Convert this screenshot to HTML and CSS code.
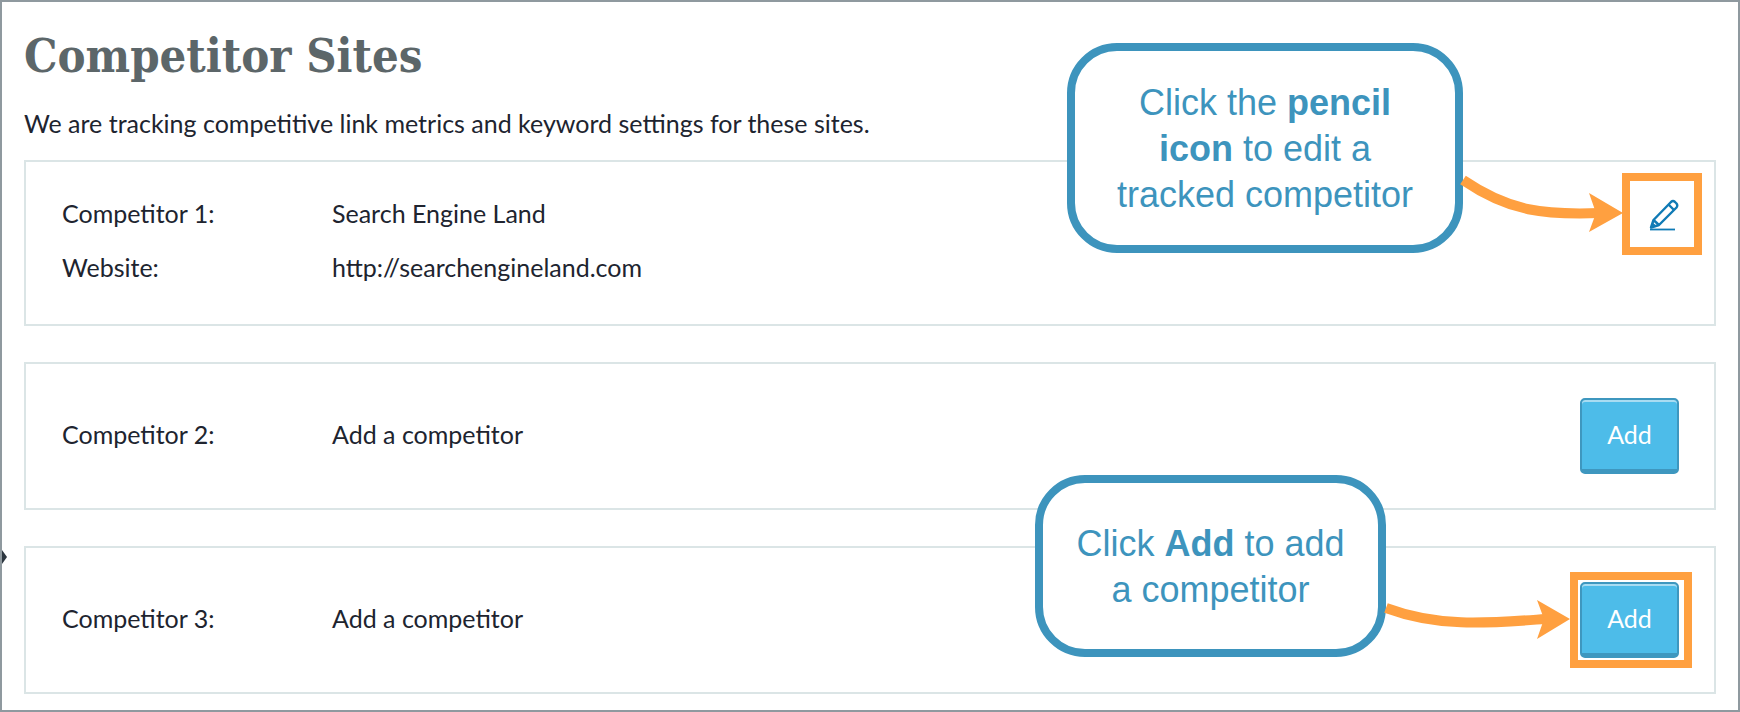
FILE: index.html
```html
<!DOCTYPE html>
<html lang="en">
<head>
    <meta charset="UTF-8">
    <meta name="viewport" content="width=device-width, initial-scale=1.0">
    <title>Competitor Sites</title>
    <link rel="stylesheet" href="styles.css">
</head>
<body>
    <div class="frame">
        <span class="notch"></span>
        <main>
            <h1>Competitor Sites</h1>
            <p class="intro">We are tracking competitive link metrics and keyword settings for these sites.</p>

            <section class="card card-tracked">
                <div class="rows">
                    <div class="row">
                        <span class="label">Competitor 1:</span>
                        <span>Search Engine Land</span>
                    </div>
                    <div class="row">
                        <span class="label">Website:</span>
                        <span>http://searchengineland.com</span>
                    </div>
                </div>
                <a class="edit-link" href="#edit" aria-label="Edit competitor">
                    <svg width="30" height="32" viewBox="0 0 30 32" fill="none" stroke="#0f7ab5" stroke-width="2.4">
                        <path d="M2 28.5 L4.5 21 L22 3 Q24 1.2 26 3 L27.5 4.5 Q29 6.5 27.5 8.5 L10 26 Z" stroke-linejoin="round"/>
                        <path d="M4.5 21 L10 26"/>
                        <path d="M19.5 5.5 L25 11"/>
                        <path d="M2 28.5 L3.5 24 L7 27 Z" fill="#0f7ab5" stroke-width="1"/>
                        <path d="M1 30.5 H26" stroke-width="1.8"/>
                    </svg>
                </a>
            </section>

            <section class="card">
                <div class="row">
                    <span class="label">Competitor 2:</span>
                    <span>Add a competitor</span>
                </div>
                <button class="add-btn" type="button">Add</button>
            </section>

            <section class="card">
                <div class="row">
                    <span class="label">Competitor 3:</span>
                    <span>Add a competitor</span>
                </div>
                <button class="add-btn" type="button">Add</button>
            </section>
        </main>

        <!-- annotations drawn over the page -->
        <div class="callout callout-edit">
            <p>Click the <b>pencil</b><br><b>icon</b> to edit a<br>tracked competitor</p>
        </div>
        <div class="callout callout-add">
            <p>Click <b>Add</b> to add<br>a competitor</p>
        </div>
        <div class="marker marker-edit"></div>
        <div class="marker marker-add"></div>
        <svg class="arrows" width="1740" height="712" viewBox="0 0 1740 712" fill="none">
            <path d="M1463 180 C1510 212 1545 215 1600 213" stroke="#ffa040" stroke-width="10"/>
            <path d="M1623 213 L1589 193 L1596 213 L1589 232 Z" fill="#ffa040"/>
            <path d="M1386 608 C1440 628 1490 623 1545 619" stroke="#ffa040" stroke-width="10"/>
            <path d="M1570 619 L1537 600 L1544 619 L1537 639 Z" fill="#ffa040"/>
        </svg>
    </div>
</body>
</html>
```

FILE: styles.css
```css
* {
    box-sizing: border-box;
}

body {
    margin: 0;
    font-family: Lato, Arial, sans-serif;
    font-size: 25px;
    color: #20242f;
    background-color: #fff;
}

.frame {
    position: relative;
    width: 1740px;
    height: 712px;
    overflow: hidden;
    border: 2px solid #8f999f;
}

.notch {
    position: absolute;
    left: 0;
    top: 548px;
    border-top: 7px solid transparent;
    border-bottom: 7px solid transparent;
    border-left: 5px solid #2c3640;
}

main {
    padding: 26px 22px 0;
}

h1 {
    margin: 0;
    font-family: "DejaVu Serif Condensed", "DejaVu Serif", Georgia, serif;
    font-stretch: condensed;
    font-size: 46.8px;
    line-height: 56px;
    font-weight: 700;
    color: #5c6669;
}

.intro {
    margin: 24px 0 22px;
    line-height: 30px;
}

.card {
    display: flex;
    align-items: center;
    justify-content: space-between;
    height: 148px;
    margin-bottom: 36px;
    padding: 0 35px 0 36px;
    border: 2px solid #dbe5e6;
}

.card > .row {
    padding-bottom: 4px;
}

.card-tracked {
    align-items: flex-start;
    height: 166px;
    padding-top: 36px;
}

.rows {
    display: flex;
    flex-direction: column;
    gap: 24px;
}

.row {
    display: flex;
    line-height: 30px;
}

.label {
    width: 270px;
}

.edit-link {
    display: block;
    height: 32px;
    margin-top: 1px;
}

.add-btn {
    width: 99px;
    height: 76px;
    padding: 0 0 2px;
    font-family: inherit;
    font-size: 25px;
    color: #fff;
    background-color: #4dbce9;
    border: 2px solid #3e97bf;
    border-bottom-width: 5px;
    border-radius: 5px;
    box-shadow: inset 0 2px 0 #a8dcf2;
}

.callout {
    position: absolute;
    display: flex;
    align-items: center;
    justify-content: center;
    text-align: center;
    font-family: "Liberation Sans", Arial, sans-serif;
    font-size: 36px;
    line-height: 46px;
    color: #3d94bd;
    background-color: #fff;
    border: 8px solid #3d94bd;
    border-radius: 50px;
}

.callout p {
    margin: 0;
    padding-top: 1px;
}

.callout-edit {
    left: 1065px;
    top: 41px;
    width: 396px;
    height: 210px;
}

.callout-add {
    left: 1033px;
    top: 473px;
    width: 351px;
    height: 182px;
}

.marker {
    position: absolute;
    border: 8px solid #ffa040;
}

.marker-edit {
    left: 1620px;
    top: 171px;
    width: 80px;
    height: 82px;
}

.marker-add {
    left: 1568px;
    top: 570px;
    width: 122px;
    height: 96px;
}

.arrows {
    position: absolute;
    left: -2px;
    top: -2px;
    pointer-events: none;
}
```
